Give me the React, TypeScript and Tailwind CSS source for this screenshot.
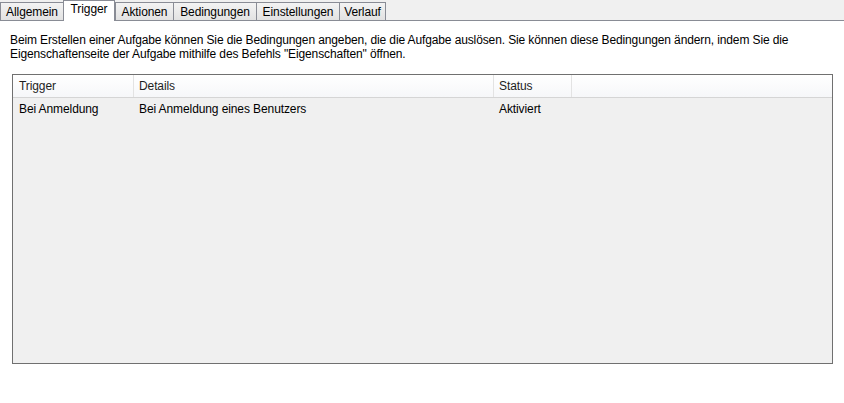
import { useState } from "react";

const tabs = [
  { name: "Allgemein", width: "w-[63px]" },
  { name: "Trigger", width: "w-[52px]" },
  { name: "Aktionen", width: "w-[58px]" },
  { name: "Bedingungen", width: "w-[83px]" },
  { name: "Einstellungen", width: "w-[83px]" },
  { name: "Verlauf", width: "w-[47px]" },
];

const triggers = [
  { trigger: "Bei Anmeldung", details: "Bei Anmeldung eines Benutzers", status: "Aktiviert" },
];

const App = () => {
  const [activeTab, setActiveTab] = useState("Trigger");

  return (
    <div className="w-[844px] h-[403px] bg-white text-[12px] tracking-[-0.1px] text-black font-['Segoe_UI','Liberation_Sans',sans-serif] overflow-hidden">
      {/* tab strip */}
      <div className="flex items-end h-[21px] bg-[#f0f0f0] border-b border-[#898c95]">
        {tabs.map((tab, i) => {
          const selected = tab.name === activeTab;
          return (
            <div
              key={tab.name}
              onClick={() => setActiveTab(tab.name)}
              className={`${tab.width} flex items-center justify-center border-t border-l border-[#898c95] cursor-default ${
                selected
                  ? "h-[21px] -mb-px bg-white border-r pb-[4px]"
                  : "h-[18px] bg-gradient-to-b from-[#f3f3f3] to-[#e2e2e2]"
              } ${i === tabs.length - 1 ? "border-r" : ""}`}
            >
              {tab.name}
            </div>
          );
        })}
      </div>

      {/* description */}
      <p className="pl-[10px] pt-[12px] leading-[14px] whitespace-nowrap tracking-[-0.12px]">
        Beim Erstellen einer Aufgabe können Sie die Bedingungen angeben, die die Aufgabe auslösen. Sie können diese Bedingungen ändern, indem Sie die
        <br />
        Eigenschaftenseite der Aufgabe mithilfe des Befehls "Eigenschaften" öffnen.
      </p>

      {/* trigger list */}
      <div className="ml-[12px] mt-[13px] w-[821px] h-[290px] border border-[#707070] bg-[#f0f0f0]">
        <div className="flex h-[23px] bg-gradient-to-b from-white to-[#f6f7f9] border-b border-[#d5d5d5] text-[#1e1e1e]">
          <div className="w-[121px] pl-[6px] flex items-center border-r border-[#e3e3e3]">Trigger</div>
          <div className="w-[360px] pl-[5px] flex items-center border-r border-[#e3e3e3]">Details</div>
          <div className="w-[78px] pl-[5px] flex items-center border-r border-[#e3e3e3]">Status</div>
          <div className="flex-1" />
        </div>
        {triggers.map((row) => (
          <div key={row.trigger} className="flex h-[22px] items-center">
            <div className="w-[121px] pl-[6px]">{row.trigger}</div>
            <div className="w-[360px] pl-[5px]">{row.details}</div>
            <div className="w-[78px] pl-[5px]">{row.status}</div>
          </div>
        ))}
      </div>
    </div>
  );
};

export default App;
